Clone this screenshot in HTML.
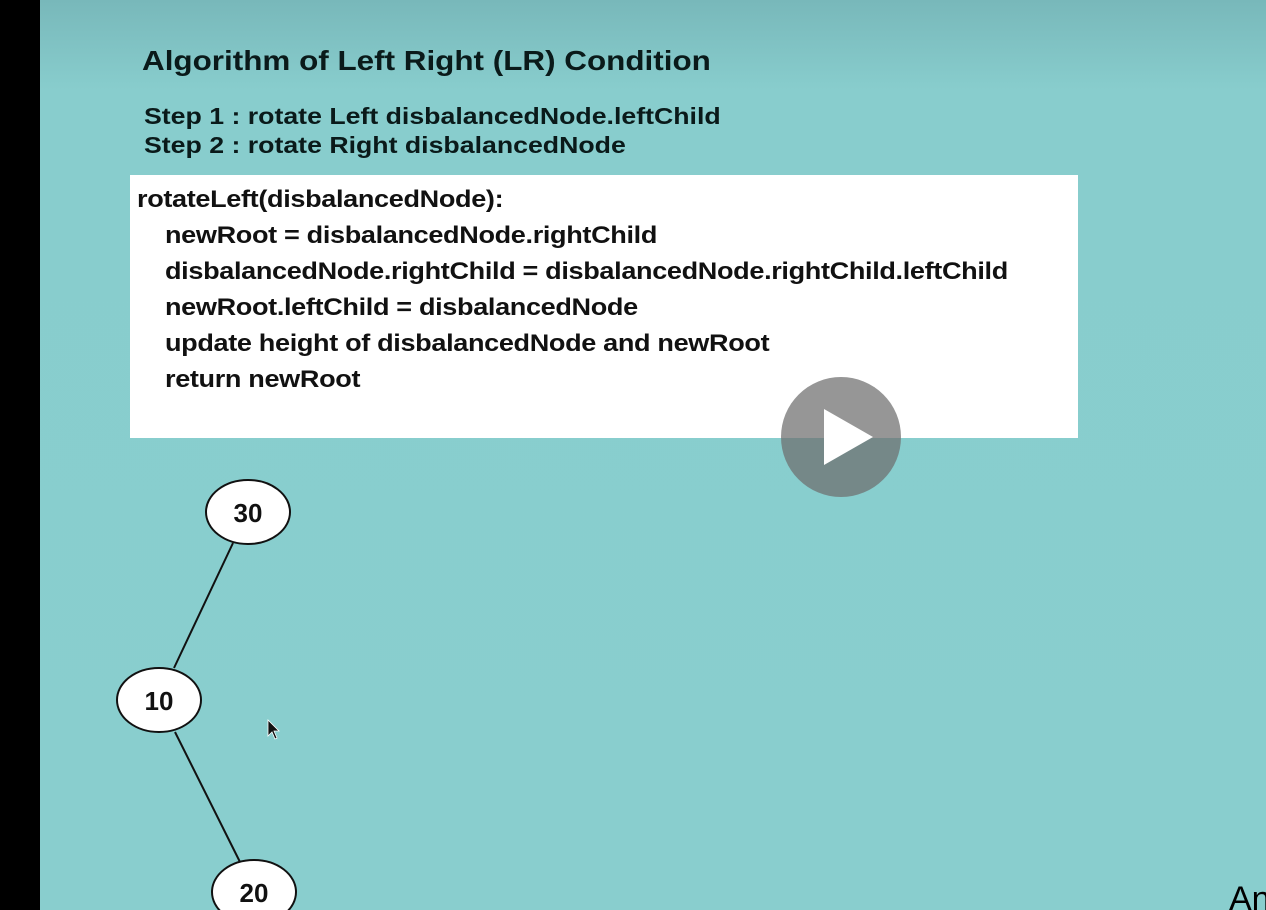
<!DOCTYPE html>
<html><head><style>
body{margin:0;width:1266px;height:910px;overflow:hidden;position:relative;background:linear-gradient(#78b8ba 0px,#88cdcd 90px,#89cece 100%);font-family:"Liberation Sans",sans-serif;}
.bar{position:absolute;left:0;top:0;width:40px;height:910px;background:#000;}
.t{position:absolute;white-space:nowrap;color:#0a1a1a;font-weight:bold;transform-origin:0 0;}
.box{position:absolute;left:130px;top:175px;width:948px;height:263px;background:#fff;}
.code{position:absolute;white-space:nowrap;font-size:24px;color:#111;font-weight:bold;letter-spacing:-0.3px;transform:scaleX(1.127);transform-origin:0 0;}
</style></head><body>
<div class="bar"></div>
<div class="t" style="left:142px;top:45px;font-size:28px;transform:scaleX(1.122)">Algorithm of Left Right (LR) Condition</div>
<div class="t" style="left:144px;top:102px;font-size:23px;line-height:29px;transform:scaleX(1.16)">Step 1 : rotate Left disbalancedNode.leftChild<br>Step 2 : rotate Right disbalancedNode</div>
<div class="box"></div>
<div class="code" style="left:137px;top:186px">rotateLeft(disbalancedNode):</div>
<div class="code" style="left:165px;top:222px">newRoot = disbalancedNode.rightChild</div>
<div class="code" style="left:165px;top:258px">disbalancedNode.rightChild = disbalancedNode.rightChild.leftChild</div>
<div class="code" style="left:165px;top:294px">newRoot.leftChild = disbalancedNode</div>
<div class="code" style="left:165px;top:330px">update height of disbalancedNode and newRoot</div>
<div class="code" style="left:165px;top:366px">return newRoot</div>
<svg width="1266" height="910" style="position:absolute;left:0;top:0">
<circle cx="841" cy="437" r="60" fill="rgba(110,110,110,0.72)"/>
<path d="M824 409 L873 437 L824 465 Z" fill="#fff"/>
<line x1="233" y1="543" x2="174" y2="668" stroke="#111" stroke-width="2"/>
<line x1="175" y1="732" x2="240" y2="862" stroke="#111" stroke-width="2"/>
<ellipse cx="248" cy="512" rx="42" ry="32" fill="#fff" stroke="#111" stroke-width="2"/>
<ellipse cx="159" cy="700" rx="42" ry="32" fill="#fff" stroke="#111" stroke-width="2"/>
<ellipse cx="254" cy="892" rx="42" ry="32" fill="#fff" stroke="#111" stroke-width="2"/>
<g font-family="Liberation Sans" font-weight="bold" font-size="26" text-anchor="middle" fill="#111">
<text x="248" y="522">30</text><text x="159" y="710">10</text><text x="254" y="902">20</text></g>
<path d="M268 720 L268 736 L272 732 L275 739 L277 738 L274 731 L279 731 Z" fill="#111" stroke="#fff" stroke-width="0.8"/>
<text x="1229" y="910" font-family="Liberation Sans" font-size="34" fill="#000">An</text>
</svg>
</body></html>
